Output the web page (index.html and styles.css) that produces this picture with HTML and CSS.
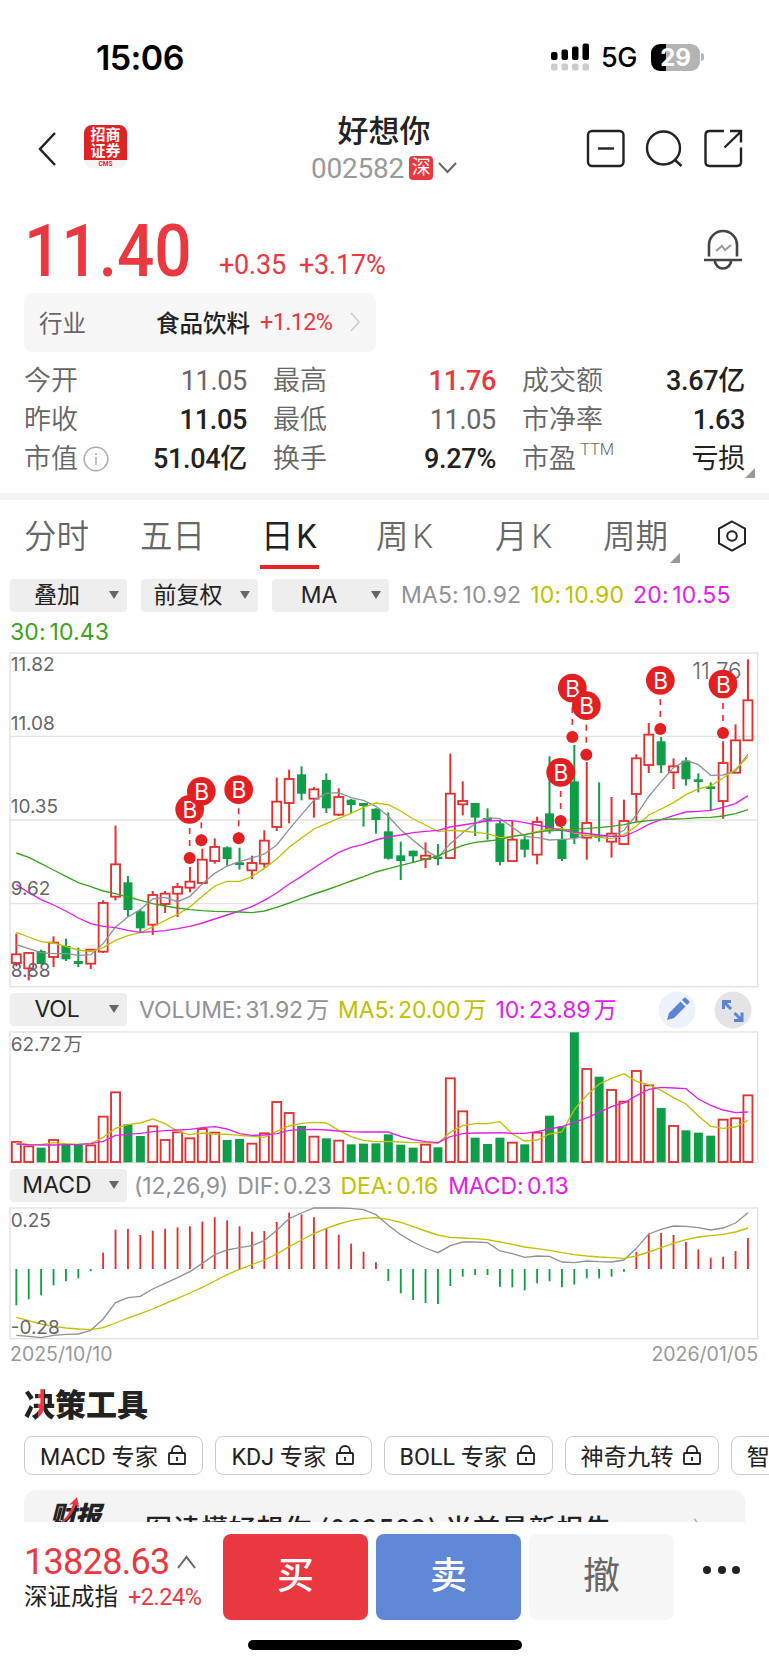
FILE: index.html
```html
<!DOCTYPE html>
<html lang="zh-CN">
<head>
<meta charset="utf-8">
<title>好想你 002582</title>
<link rel="stylesheet" href="styles.css">
</head>

<body>
<div class="status">
	<div class="time">15:06</div>
	<svg class="signal" width="40" height="28" viewBox="0 0 40 28">
		<g fill="#000"><rect x="0" y="9" width="6.500" height="8" rx="2"/><rect x="10.500" y="6.500" width="6.500" height="10.500" rx="2"/><rect x="21" y="3.500" width="6.500" height="13.500" rx="2"/><rect x="31.500" y="0.500" width="6.500" height="16.500" rx="2"/></g>
		<g fill="#ccc"><rect x="0" y="20.500" width="6.500" height="7" rx="2"/><rect x="10.500" y="20.500" width="6.500" height="7" rx="2"/><rect x="21" y="20.500" width="6.500" height="7" rx="2"/><rect x="31.500" y="20.500" width="6.500" height="7" rx="2"/></g>
	</svg>
	<div class="net">5G</div>
	<div class="battery">29</div>
	<div class="nub"></div>
</div>

<div class="nav">
	<svg class="back" width="20" height="36" viewBox="0 0 20 36"><path d="M18 2L3 18l15 16"/></svg>
	<div class="logo"><div>招商</div><div>证券</div><span>CMS</span></div>
	<div class="title">
		<h1>好想你</h1>
		<div class="code">002582<b>深</b><svg width="19" height="12" viewBox="0 0 19 12"><path d="M1 1l8.500 9L18 1"/></svg></div>
	</div>
	<svg class="tools" width="158" height="40" viewBox="0 0 158 40">
		<rect x="3" y="3" width="35.500" height="35" rx="4"/>
		<path d="M13 20.500h16"/>
		<circle cx="78.500" cy="20" r="16.500"/>
		<path d="M90 32l6.500 6"/>
		<path d="M139 3h-14.500q-4 0-4 4v27q0 4 4 4h27.500q4 0 4-4V19.500M145 3h11v11.500M155.500 4l-16 15.500"/>
	</svg>
</div>

<div class="quote">
	<div class="price"><span>11.40</span></div>
	<div class="change">+0.35</div>
	<div class="change pct">+3.17%</div>
	<svg class="bell" width="40" height="42" viewBox="0 0 40 42">
		<path d="M6 27.500V16a14 14 0 0 1 28 0v11.500"/>
		<path d="M1 31h38M12 32a8 7.500 0 0 0 16 0"/>
		<path class="spark" d="M13 22l6-5 3 4 6-5"/>
	</svg>
</div>

<div class="sector">
	<span class="name">行业</span>
	<span class="trade">食品饮料</span>
	<span class="up">+1.12%</span>
	<svg width="10" height="20" viewBox="0 0 10 20"><path d="M1 1l8 9-8 9"/></svg>
</div>

<div class="stats">
	<div><span>今开</span><b class="flat">11.05</b></div>
	<div><span>最高</span><b class="up">11.76</b></div>
	<div><span>成交额</span><b>3.67亿</b></div>
	<div><span>昨收</span><b>11.05</b></div>
	<div><span>最低</span><b class="flat">11.05</b></div>
	<div><span>市净率</span><b>1.63</b></div>
	<div><span>市值<svg width="26" height="26" viewBox="0 0 26 26"><circle cx="13" cy="13" r="11.800"/><path d="M13 11v8M13 7v2"/></svg></span><b>51.04亿</b></div>
	<div><span>换手</span><b>9.27%</b></div>
	<div><span>市盈<sup>TTM</sup></span><b class="loss">亏损</b><i class="corner"></i></div>
</div>

<div class="tabs">
	<span>分时</span>
	<span>五日</span>
	<span class="on">日 K</span>
	<span>周 K</span>
	<span>月 K</span>
	<span class="more">周期<i class="corner"></i></span>
	<svg width="30" height="32" viewBox="0 0 30 32"><path d="M15 1.500l13 7.200v14.600l-13 7.200-13-7.200V8.700z"/><circle cx="15" cy="16" r="4.800"/></svg>
</div>

<div class="legend top">
	<div class="pick">叠加</div>
	<div class="pick">前复权</div>
	<div class="pick">MA</div>
	<span class="c5">MA5: 10.92</span>
	<span class="c10">10: 10.90</span>
	<span class="c20">20: 10.55</span>
</div>
<div class="legend second"><span class="c30">30: 10.43</span></div>

<svg id="kline" class="chart" width="750" height="336" viewBox="27 35 2250 1008"></svg>

<div class="legend vol">
	<div class="pick">VOL</div>
	<span class="c5">VOLUME: 31.92 万</span>
	<span class="c10">MA5: 20.00 万</span>
	<span class="c20">10: 23.89 万</span>
	<svg class="draw" width="38" height="38" viewBox="0 0 38 38"><circle cx="19" cy="19" r="18.500" fill="#edf1fb"/><path d="M9 29l2-7L22.500 10.500l5 5L16 27zM24 9l2-2q1-1 2 0l3 3q1 1 0 2l-2 2z" fill="#5b84d4"/></svg>
	<svg class="full" width="38" height="38" viewBox="0 0 38 38"><circle cx="19" cy="19" r="18.500" fill="#e4e4e6"/><path d="M9.500 18V10.500H17M10 11l7 7M28 21.500v8h-8M27.500 29l-7-7" fill="none" stroke="#5b84d4" stroke-width="3"/></svg>
</div>
<svg id="volume" class="chart" width="750" height="133" viewBox="27 152 2250 399"></svg>

<div class="legend macd">
	<div class="pick">MACD</div>
	<span class="c5">(12,26,9)</span>
	<span class="c5">DIF: 0.23</span>
	<span class="c10">DEA: 0.16</span>
	<span class="c20">MACD: 0.13</span>
</div>
<svg id="macd" class="chart" width="750" height="133" viewBox="27 125 2250 399"></svg>
<div class="dates"><span>2025/10/10</span><span>2026/01/05</span></div>

<h2><em>决</em>策工具</h2>
<div class="chips">
	<div>MACD 专家<svg width="18" height="20" viewBox="0 0 18 20"><rect x="1" y="8" width="16" height="11" rx="1"/><path d="M4 8V6a5 5 0 0 1 10 0v2M9 12v4"/></svg></div>
	<div>KDJ 专家<svg width="18" height="20" viewBox="0 0 18 20"><rect x="1" y="8" width="16" height="11" rx="1"/><path d="M4 8V6a5 5 0 0 1 10 0v2M9 12v4"/></svg></div>
	<div>BOLL 专家<svg width="18" height="20" viewBox="0 0 18 20"><rect x="1" y="8" width="16" height="11" rx="1"/><path d="M4 8V6a5 5 0 0 1 10 0v2M9 12v4"/></svg></div>
	<div>神奇九转<svg width="18" height="20" viewBox="0 0 18 20"><rect x="1" y="8" width="16" height="11" rx="1"/><path d="M4 8V6a5 5 0 0 1 10 0v2M9 12v4"/></svg></div>
	<div>智能</div>
</div>
<div class="report">
	<div class="card">
		<div class="mark">财报<svg width="26" height="30" viewBox="0 0 26 30"><path d="M1 28Q12 27 19 8l-4 1 8-8 2 11-3-3Q16 26 1 30z"/></svg></div>
		<div class="text">图读懂好想你 (002582) 当前最新报告</div>
		<div class="arrow">›</div>
	</div>
</div>

<div class="trade-bar">
	<div class="index">
		<div class="value">13828.63<svg width="19" height="14" viewBox="0 0 19 14"><path d="M1 13l8.500-11L18 13"/></svg></div>
		<div class="sub">深证成指<span>+2.24%</span></div>
	</div>
	<div class="btn buy">买</div>
	<div class="btn sell">卖</div>
	<div class="btn cancel">撤</div>
	<div class="dots"><i></i><i></i><i></i></div>
</div>
<div class="home"></div>

<script src="charts.js"></script>
</body>
</html>
```
FILE: charts.js
```js
// one bar every STEP units, three units per css pixel
var X0 = 49;
var STEP = 37.2;
var RED = '#e22f30';
var GREEN = '#0f9d47';
var GREY = '#8f9296';
var YELLOW = '#c0c000';
var PINK = '#e020e8';
var LEAF = '#3ba220';

// up/down, high, body top, body bottom, low
var candles = [
	[1,880,942,968,978],[1,938,938,984,1020],[0,928,933,970,972],[1,888,907,950,980],[0,895,918,956,962],
	[0,922,963,970,980],[1,926,928,970,986],[1,780,788,934,938],[1,556,672,769,780],[0,707,727,808,830],
	[0,808,814,863,875],[1,752,764,853,884],[1,752,760,791,818],[1,728,740,760,830],[1,680,724,742,756],
	[1,625,658,728,732],[1,594,620,662,670],[0,618,622,655,676],[0,622,667,673,688],[1,646,668,690,716],
	[1,570,601,670,682],[1,412,484,560,572],[1,388,416,488,549],[0,378,403,459,480],[1,440,447,475,532],
	[0,399,420,503,518],[1,444,470,523,527],[0,476,479,493,520],[0,488,489,496,559],[0,504,506,538,580],
	[0,516,574,654,658],[0,604,646,661,719],[0,631,632,647,668],[1,606,646,656,683],[0,611,650,655,675],
	[1,340,460,653,655],[1,423,482,492,525],[0,488,489,531,587],[0,504,534,540,598],[0,540,550,664,675],
	[1,540,598,662,664],[0,582,598,627,651],[1,529,545,643,672],[0,348,520,572,580],[0,560,597,655,662],
	[0,314,424,592,611],[1,365,548,592,658],[0,426,589,592,604],[1,470,580,604,652],[1,478,542,611,614],
	[1,342,354,461,544],[1,248,283,374,398],[0,290,304,374,398],[1,354,378,396,446],[0,351,362,416,436],
	[0,399,418,424,456],[0,426,439,445,510],[1,303,368,482,535],[1,252,300,397,399],[1,57,180,300,302]
];
var ma5 = [913,925,937,940,940,945,943,910,860,830,808,776,771,784,768,730,699,677,664,653,641,614,567,523,480,459,457,472,480,498,528,568,600,630,651,610,577,550,532,535,560,588,592,599,597,595,585,586,589,570,524,468,424,382,360,373,405,404,392,342];
var ma10 = [876,890,904,908,918,929,934,922,900,886,877,860,840,822,800,768,737,723,723,709,684,656,621,593,566,550,534,519,501,488,493,512,536,554,574,570,572,576,580,592,588,583,573,566,565,578,584,591,595,583,558,524,506,487,463,446,437,413,387,350];
var ma20 = [733,757,778,794,812,833,850,858,862,870,876,874,871,865,858,848,836,824,812,799,780,758,731,708,683,659,636,621,612,599,590,584,577,573,570,560,554,548,542,541,541,547,554,561,570,576,579,584,588,588,572,552,538,526,515,513,510,501,490,466];
var ma30 = [638,651,670,689,708,727,739,752,760,770,780,790,797,803,808,811,813,814,815,817,812,801,788,774,761,749,736,722,709,695,685,675,666,656,647,630,615,606,602,598,588,583,576,570,570,567,564,562,558,553,545,541,538,536,535,532,531,527,520,508];
// buy points: x, badge y, dot y
var buys = [[569,507,653],[604,453,600],[716,448,594],[1682,396,542],[1717,143,290],[1759,196,343],[1981,120,266],[2169,131,278]];

var vol = [484,497,502,478,494,494,494,408,335,432,467,437,478,455,473,445,456,479,476,489,458,364,397,437,468,474,480,492,490,489,462,493,502,492,501,293,392,472,491,472,486,492,456,406,438,156,265,289,328,363,271,314,383,436,450,457,466,417,413,344];
var vol5 = [487,493,493,487,490,492,490,471,444,433,428,416,430,453,463,458,461,462,465,468,471,453,437,429,426,428,450,469,480,484,483,485,487,487,489,456,436,430,430,424,461,482,479,461,455,388,345,311,294,280,303,313,330,352,371,407,438,444,440,420];
var vol10 = [491,493,494,494,493,492,490,483,465,462,459,454,451,449,447,442,439,446,460,465,464,460,450,448,447,449,452,454,455,455,455,468,478,484,487,469,460,458,458,457,459,459,454,446,439,426,413,396,379,368,346,327,321,323,325,356,375,389,397,395];

var bars = [420,402,390,360,348,339,317,262,193,191,209,196,190,186,183,169,156,165,183,199,197,170,142,147,156,188,208,235,259,291,347,384,404,413,416,362,334,329,329,364,366,375,354,348,366,358,339,339,334,319,260,205,203,209,230,252,277,274,257,218];
var dif = [510,513,517,510,507,506,495,461,412,397,393,371,354,337,319,294,268,254,247,241,226,195,160,143,128,128,128,129,133,148,180,208,230,248,262,241,230,230,232,257,265,276,272,273,290,292,287,289,290,284,249,206,192,182,183,187,194,188,173,142];
var dea = [456,466,476,483,488,491,493,487,473,458,445,431,415,399,383,366,347,328,312,298,284,266,244,224,205,189,176,166,159,157,162,171,184,197,209,216,218,220,223,230,237,245,250,255,262,268,272,275,277,279,272,260,247,234,223,215,211,207,200,188];

function x(i) { return X0 + i * STEP; }

function box(x, y, w, h, fill, stroke, sw) {
	return '<rect x="' + x + '" y="' + y + '" width="' + w + '" height="' + h + '" fill="' + fill + '" stroke="' + (stroke || 'none') + '" stroke-width="' + (sw || 0) + '"/>';
}

function line(x1, y1, x2, y2, color, w, dash) {
	return '<line x1="' + x1 + '" y1="' + y1 + '" x2="' + x2 + '" y2="' + y2 + '" stroke="' + color + '" stroke-width="' + w + '"' + (dash ? ' stroke-dasharray="' + dash + '"' : '') + '/>';
}

function curve(ys, color) {
	var pts = ys.map(function (y, i) { return x(i) + ',' + y; });
	return '<polyline points="' + pts.join(' ') + '" fill="none" stroke="' + color + '" stroke-width="4"/>';
}

function label(x, y, text, cls) {
	return '<text x="' + x + '" y="' + y + '" class="' + (cls || 'axis') + '">' + text + '</text>';
}

function drawKline() {
	var s = box(30, 38, 2243, 1001, 'none', '#e2e2e2', 4);
	[288, 539, 790].forEach(function (y) { s += line(30, y, 2273, y, '#e2e2e2', 4); });
	candles.forEach(function (c, i) {
		var color = c[0] ? RED : GREEN;
		if (c[0]) {
			s += line(x(i), c[1], x(i), c[2], color, 6) + line(x(i), c[3], x(i), c[4], color, 6);
			s += box(x(i) - 13.5, c[2], 27, c[3] - c[2], 'none', color, 5.5);
		} else {
			s += line(x(i), c[1], x(i), c[4], color, 6) + box(x(i) - 13.5, c[2] - 1, 27, c[3] - c[2] + 2, color);
		}
	});
	s += curve(ma5, GREY) + curve(ma10, YELLOW) + curve(ma20, PINK) + curve(ma30, LEAF);
	s += label(32, 93, '11.82') + label(32, 270, '11.08') + label(32, 517, '10.35') + label(32, 764, '9.62') + label(32, 1010, '8.88');
	s += label(2077, 117, '11.76', 'peak');
	buys.forEach(function (b) {
		s += line(b[0], b[2], b[0], b[1], RED, 5, '18 18');
		s += '<circle cx="' + b[0] + '" cy="' + b[1] + '" r="43" fill="#e22022"/><circle cx="' + b[0] + '" cy="' + b[2] + '" r="18" fill="#e22022"/>';
		s += label(b[0] + 1, b[1] + 26, 'B', 'buy-mark');
	});
	document.getElementById('kline').innerHTML = s;
}

function drawVolume() {
	var s = box(30, 155, 2243, 392, 'none', '#e2e2e2', 4);
	vol.forEach(function (y, i) {
		if (candles[i][0])
			s += box(x(i) - 13.5, y + 1, 27, 544 - y, 'none', RED, 5.5);
		else
			s += box(x(i) - 13.5, y, 27, 546 - y, GREEN);
	});
	s += curve(vol5, YELLOW) + curve(vol10, PINK) + label(32, 211, '62.72 万');
	document.getElementById('volume').innerHTML = s;
}

function drawMacd() {
	var s = box(30, 128, 2243, 392, 'none', '#e2e2e2', 4);
	bars.forEach(function (y, i) {
		s += line(x(i), 311, x(i), y, y < 311 ? RED : GREEN, 5.5);
	});
	s += curve(dif, GREY) + curve(dea, YELLOW) + label(32, 184, '0.25') + label(32, 507, '-0.28');
	document.getElementById('macd').innerHTML = s;
}

drawKline();
drawVolume();
drawMacd();
```
FILE: styles.css
```css
* { box-sizing: border-box; }

body
{
	margin: 0;
	width: 769px;
	height: 1665px;
	overflow: hidden;
	background: #fff;
	color: #222;
	font-family: Roboto, "Noto Sans CJK SC", sans-serif;
}

svg { fill: none; stroke: #222; stroke-width: 2; flex: none; }
.up { color: #e9383f !important; }

/* status bar */
.status
{
	display: flex;
	align-items: center;
	height: 116px;
	padding: 0 0 2px 96px;
	font-family: Inter, sans-serif;
	color: #000;
}
.time { width: 455px; font-size: 34px; font-weight: 600; letter-spacing: -0.6px; }
.signal { stroke: none; margin-bottom: 1px; }
.net { width: 49px; margin-left: 10px; padding-top: 1px; font-size: 27px; font-weight: 500; letter-spacing: -0.5px; }
.battery
{
	width: 49px;
	height: 27px;
	margin-left: 1px;
	border-radius: 9px;
	background: linear-gradient(90deg, #000 15px, #b4b4b4 15px);
	color: #fff;
	font-size: 24px;
	font-weight: 700;
	line-height: 27px;
	text-align: center;
}
.nub { width: 3px; height: 8px; margin-left: 1px; border-radius: 0 3px 3px 0; background: #b4b4b4; }

/* header */
.nav { display: flex; height: 94px; padding-left: 37px; }
.back { margin-top: 15px; stroke-width: 2.5; }
.logo
{
	width: 43px;
	height: 43px;
	margin: 9px 0 0 27px;
	padding-top: 2px;
	border-radius: 8px;
	background: linear-gradient(#de2325 35px, #f5f5f5 35px);
	color: #fff;
	font-size: 15px;
	font-weight: 700;
	line-height: 16px;
	text-align: center;
}
.logo span { display: block; color: #de2325; font-size: 6.5px; line-height: 11px; }
.title { width: 250px; margin: -3px 0 0 132px; text-align: center; }
h1 { margin: 0; font-size: 31px; font-weight: 500; line-height: 38px; }
.code { display: flex; align-items: center; justify-content: center; height: 38px; margin-top: -2px; color: #999; font-size: 28px; letter-spacing: -0.2px; }
.code b { width: 24px; height: 24px; margin: 0 5px; border-radius: 4px; background: #e9383f; color: #fff; font-size: 19px; font-weight: 400; line-height: 23px; text-align: center; }
.code svg { stroke: #666; }
.tools { margin: 12px 0 0 76px; stroke-width: 2.4; }

.quote { display: flex; height: 83px; padding-left: 24px; color: #e9383f; }
.price { width: 195px; font-size: 73px; font-weight: 500; line-height: 82px; }
.price span { display: inline-block; transform: scaleX(0.9); transform-origin: left; }
.change { width: 80px; padding-top: 38px; font-size: 27px; line-height: 34px; letter-spacing: -0.2px; }
.pct { width: 404px; }
.bell { margin-top: 19px; stroke: #444; stroke-width: 2.6; }
.bell .spark { stroke: #999; stroke-width: 2; }

.sector
{
	display: flex;
	align-items: center;
	width: 352px;
	height: 59px;
	margin-left: 24px;
	padding: 0 0 2px 15px;
	border-radius: 8px;
	background: #f7f7f7;
	font-size: 23.5px;
}
.sector .name { width: 117px; color: #666; }
.sector .trade { width: 104px; font-weight: 500; }
.sector .up { width: 90px; letter-spacing: -0.7px; }
.sector svg { stroke: #ccc; stroke-width: 1.5; }

.stats
{
	display: grid;
	grid-template-columns: 223px 223px 223px;
	grid-auto-rows: 39.2px;
	column-gap: 26px;
	height: 141px;
	padding: 10px 0 0 24px;
	font-size: 27px;
	line-height: 38px;
}
.stats div { display: flex; justify-content: space-between; position: relative; }
.stats span { color: #666; font-weight: 350; }
.stats b { font-weight: 500; letter-spacing: -0.3px; }
.stats .flat, .stats .loss { font-weight: 400; }
.stats .flat { color: #666; }
.stats svg { margin: 0 0 -4px 5px; stroke: #aaa; stroke-width: 1.5; }
.stats sup { margin-left: 4px; font-size: 16.5px; line-height: 10px; vertical-align: 13px; }
.corner { position: absolute; right: -10px; bottom: -7px; border: 5px solid transparent; border-right-color: #999; border-bottom-color: #999; }
.stats .corner { bottom: 2px; }

/* period tabs */
.tabs
{
	display: flex;
	height: 77px;
	padding-left: 24px;
	border-top: 7px solid #f4f4f4;
	color: #666;
	font-size: 32.5px;
	font-weight: 350;
	line-height: 74px;
	white-space: nowrap;
	word-spacing: -4px;
}
.tabs span { width: 116px; height: 70px; }
.tabs span + span { width: 124px; }
.tabs .on { width: 59px; height: 69px; margin: 0 57px 0 -4px; padding-left: 1px; border-bottom: 4px solid #ec2125; color: #222; font-weight: 400; letter-spacing: -0.6px; }
.tabs .on + span { width: 119px; }
.tabs .on + span + span { width: 108px; }
.tabs .more { position: relative; width: 65px !important; }
.more .corner { right: -12px; bottom: 7px; }
.tabs svg { margin: 20px 0 0 49px; }

/* indicator rows */
.legend
{
	display: flex;
	align-items: center;
	padding-left: 10px;
	font-family: Inter, "Noto Sans CJK SC", sans-serif;
	font-size: 23px;
	white-space: nowrap;
	word-spacing: -3px;
}
.pick
{
	position: relative;
	flex: none;
	width: 117px;
	height: 33px;
	margin-right: 14px;
	padding-right: 23px;
	border-radius: 4px;
	background: #eee;
	color: #222;
	line-height: 33px;
	text-align: center;
}
.pick:after { content: ""; position: absolute; right: 8px; top: 12px; border: 5.5px solid transparent; border-top: 8px solid #666; border-bottom: 0; }
.c5 { color: #8f9296; margin-right: 9px; }
.c10 { color: #c0c000; margin-right: 9px; }
.c20 { color: #e020e8; }
.c30 { color: #3ba220; }
.top { height: 50px; }
.top .pick + span { margin-left: -2px; }
.top span, .second span { letter-spacing: 0.15px; }
.second { height: 24px; margin-bottom: 8px; }
.vol { height: 43px; letter-spacing: -0.15px; }
.vol .pick { margin-right: 12px; }
.vol span { margin-top: -3px; }
.vol .draw { margin-left: auto; }
.vol .full { margin: 0 17px 0 18px; }
.vol svg { stroke: none; }
.macd { height: 43px; }
.macd .pick { margin-right: 7px; }
.macd span { letter-spacing: -0.1px; }
.macd .c10 { margin-right: 10px; }
.chart { display: block; margin-left: 9px; stroke: none; }
.axis { fill: #666; font: 400 57px Inter, "Noto Sans CJK SC", sans-serif; word-spacing: -10px; }
.peak { fill: #666; font: 350 67px Inter, sans-serif; }
.buy-mark { fill: #fff; font: 400 68px Inter, sans-serif; text-anchor: middle; }
.dates { display: flex; justify-content: space-between; height: 45px; padding: 2px 11px 0 10px; color: #999; font: 400 19.5px/24px Inter, sans-serif; }

h2 { margin: 0 0 0 24px; height: 51px; font-size: 31px; font-weight: 900; line-height: 42px; }
h2 em { font-style: normal; background: linear-gradient(90deg, #222 45%, #e9383f 45%, #e9383f 64%, #222 64%); -webkit-background-clip: text; color: transparent; }
.chips { display: flex; gap: 12px; height: 54px; padding-left: 24px; overflow: hidden; white-space: nowrap; }
.chips div { display: flex; align-items: center; flex: none; height: 39px; padding: 0 16.5px 1px 15px; border: 1px solid #ccc; border-radius: 8px; font-size: 23.2px; }
.chips svg { margin-left: 10px; stroke-width: 1.8; }

.report { height: 32px; padding: 0 24px; overflow: hidden; }
.card { display: flex; height: 90px; padding: 12px 26px; border-radius: 12px; background: #f4f4f4; }
.mark { position: relative; width: 95px; font-size: 26px; font-weight: 900; line-height: 28px; font-style: italic; letter-spacing: -1px; }
.mark svg { position: absolute; left: 4px; top: -6px; fill: #e9383f; stroke: none; }
.card .text { width: 548px; margin-top: 6px; font-family: "Noto Sans CJK SC", sans-serif; font-size: 27px; font-weight: 500; letter-spacing: 0.9px; white-space: nowrap; }
.arrow { margin-top: 9px; color: #999; }

/* bottom bar */
.trade-bar { display: flex; height: 118px; padding: 12px 0 0 24px; }
.index { width: 199px; color: #e9383f; }
.value { display: flex; align-items: center; margin-top: 8px; font-size: 36px; line-height: 40px; letter-spacing: -0.7px; }
.value svg { margin-left: 7px; stroke: #666; }
.sub { margin-top: -2px; font-size: 23.5px; line-height: 34px; color: #222; }
.sub span { margin-left: 10px; color: #e9383f; letter-spacing: -0.5px; }
.btn { width: 145px; height: 86px; margin-right: 8px; border-radius: 8px; color: #fff; font-size: 37px; font-weight: 500; line-height: 86px; text-align: center; }
.buy { background: #e9383f; }
.sell { background: #5f87d5; }
.cancel { background: #f7f7f7; color: #666; font-weight: 400; }
.dots { display: flex; gap: 6.5px; margin: 32px 0 0 21px; }
.dots i { width: 8px; height: 8px; border-radius: 50%; background: #222; }
.home { width: 274px; height: 10px; margin-left: 248px; border-radius: 5px; background: #000; }
```
